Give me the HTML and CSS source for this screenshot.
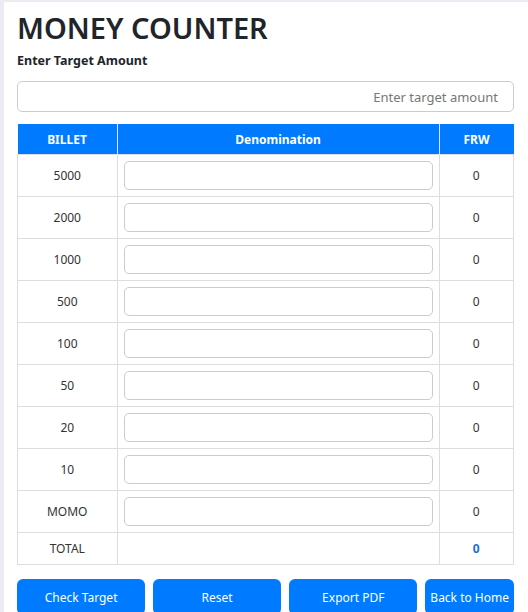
FILE: index.html
```html
<!DOCTYPE html>
<html lang="en">
<head>
  <meta charset="UTF-8">
  <meta name="viewport" content="width=device-width, initial-scale=1.0">
  <title>Money Counter</title>
  <link rel="stylesheet" href="styles.css">
</head>
<body>
  <div class="page">
    <h1>MONEY COUNTER</h1>

    <label class="target-label" for="target">Enter Target Amount</label>
    <input type="text" id="target" class="target-input" placeholder="Enter target amount">

    <table class="counter">
      <thead>
        <tr>
          <th class="col-billet">BILLET</th>
          <th>Denomination</th>
          <th class="col-frw">FRW</th>
        </tr>
      </thead>
      <tbody>
        <tr><td>5000</td><td><input type="number" class="qty"></td><td>0</td></tr>
        <tr><td>2000</td><td><input type="number" class="qty"></td><td>0</td></tr>
        <tr><td>1000</td><td><input type="number" class="qty"></td><td>0</td></tr>
        <tr><td>500</td><td><input type="number" class="qty"></td><td>0</td></tr>
        <tr><td>100</td><td><input type="number" class="qty"></td><td>0</td></tr>
        <tr><td>50</td><td><input type="number" class="qty"></td><td>0</td></tr>
        <tr><td>20</td><td><input type="number" class="qty"></td><td>0</td></tr>
        <tr><td>10</td><td><input type="number" class="qty"></td><td>0</td></tr>
        <tr><td>MOMO</td><td><input type="number" class="qty"></td><td>0</td></tr>
        <tr class="total-row"><td>TOTAL</td><td></td><td class="total">0</td></tr>
      </tbody>
    </table>

    <div class="actions">
      <button class="btn">Check Target</button>
      <button class="btn">Reset</button>
      <button class="btn">Export PDF</button>
      <button class="btn btn-home">Back to Home</button>
    </div>
  </div>
</body>
</html>
```

FILE: styles.css
```css
/* General */
body {
  margin: 0;
  font-family: "Noto Sans", "Open Sans", Arial, sans-serif;
  color: #212529;
  background: #fff;
}

.page {
  border-left: 4px solid #ebebf3;
  border-top: 2px solid #ebebf3;
  padding: 6px 14px 0 13px;
}

h1 {
  margin: 0 0 4px;
  font-size: 29px;
  font-weight: 600;
  line-height: 40px;
}

/* Target amount */
.target-label {
  display: block;
  font-size: 12.5px;
  font-weight: 700;
  margin-bottom: 12px;
}

.target-input {
  display: block;
  width: 100%;
  box-sizing: border-box;
  height: 31px;
  padding: 4px 15px;
  border: 1px solid #ccc;
  border-radius: 5px;
  font-family: inherit;
  font-size: 13px;
  text-align: right;
  margin-bottom: 12px;
}

.target-input::placeholder {
  color: #777;
}

/* Table */
.counter {
  width: 100%;
  border-collapse: collapse;
  font-size: 12px;
}

.counter th {
  background-color: #007bff;
  color: #fff;
  font-weight: 700;
  height: 30px;
  padding: 0;
  border-left: 1px solid #d8ecff;
}

.counter th:first-child {
  border-left: none;
}

.col-billet {
  width: 99px;
}

.col-frw {
  width: 74px;
}

.counter td {
  border: 1px solid #ddd;
  height: 41px;
  padding: 0 6px;
  text-align: center;
  color: #333;
}

.counter .total-row td {
  height: 31px;
}

.qty {
  display: block;
  width: 100%;
  box-sizing: border-box;
  height: 29px;
  border: 1px solid #ccc;
  border-radius: 5px;
}

.counter .total {
  color: #1a6fdb;
  font-weight: 700;
}

/* Buttons */
.actions {
  display: flex;
  gap: 8px;
  margin-top: 14px;
}

.btn {
  flex: 1;
  height: 36px;
  border: none;
  border-radius: 6px;
  background-color: #007bff;
  color: #fff;
  font-family: inherit;
  font-size: 12px;
  cursor: pointer;
}

.btn-home {
  flex: none;
  padding: 0 5px;
}
```
